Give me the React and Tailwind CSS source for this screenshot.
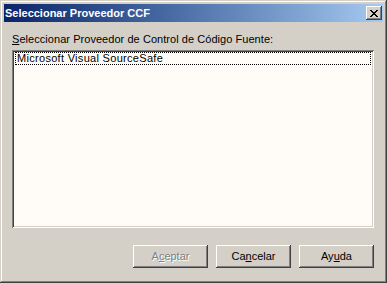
import React from 'react';

const font = { fontFamily: '"Liberation Sans", Arial, sans-serif' };

const raised =
  'shadow-[inset_-1px_-1px_0_#404040,inset_1px_1px_0_#ffffff,inset_-2px_-2px_0_#808080,inset_2px_2px_0_#d4d0c8]';

function Btn({ children, disabled }) {
  return (
    <div
      className={`w-[75px] h-[23px] bg-[#d4d0c8] flex items-center justify-center text-[11px] ${raised} ${
        disabled ? 'text-[#808080] [text-shadow:1px_1px_0_#ffffff]' : 'text-black'
      }`}
    >
      {children}
    </div>
  );
}

export default function App() {
  return (
    <div
      style={font}
      className="w-[387px] h-[283px] bg-[#d4d0c8] p-[4px] flex flex-col shadow-[inset_-1px_-1px_0_#404040,inset_1px_1px_0_#d4d0c8,inset_-2px_-2px_0_#808080,inset_2px_2px_0_#ffffff]"
    >
      {/* title bar */}
      <div className="h-[18px] flex items-center justify-between pl-[1px] pr-[1px] bg-gradient-to-r from-[#0a246a] to-[#a6caf0]">
        <span className="text-white font-bold text-[11px] leading-none">Seleccionar Proveedor CCF</span>
        <div className={`w-[16px] h-[14px] bg-[#d4d0c8] flex items-center justify-center ${raised}`}>
          <svg width="8" height="7" viewBox="0 0 8 7" shapeRendering="crispEdges">
            <path
              fill="#000"
              d="M0 0h2v1h-2zM6 0h2v1h-2zM1 1h2v1h-2zM5 1h2v1h-2zM2 2h4v1h-4zM3 3h2v1h-2zM2 4h4v1h-4zM1 5h2v1h-2zM5 5h2v1h-2zM0 6h2v1h-2zM6 6h2v1h-2z"
            />
          </svg>
        </div>
      </div>

      {/* body */}
      <div className="flex-1 flex flex-col pl-[8px] pr-[9px] pt-[11px]">
        <div className="text-[11px] leading-[13px] text-black tracking-[0.05px]">
          <span className="underline">S</span>eleccionar Proveedor de Control de Código Fuente:
        </div>
        <div className="mt-[4px] h-[178px] bg-[#fffcf7] p-[2px] shadow-[inset_1px_1px_0_#808080,inset_-1px_-1px_0_#ffffff,inset_2px_2px_0_#404040,inset_-2px_-2px_0_#d4d0c8]">
          <div className="h-[13px] mx-[1px] border border-dotted border-black flex items-center pl-[1px] text-[11px] text-black leading-none tracking-[0.3px]">
            Microsoft Visual SourceSafe
          </div>
        </div>
        <div className="mt-[17px] flex justify-end gap-[8px]">
          <Btn disabled>
            A<span className="underline">c</span>eptar
          </Btn>
          <Btn>
            Ca<span className="underline">n</span>celar
          </Btn>
          <Btn>
            Ay<span className="underline">u</span>da
          </Btn>
        </div>
      </div>
    </div>
  );
}
